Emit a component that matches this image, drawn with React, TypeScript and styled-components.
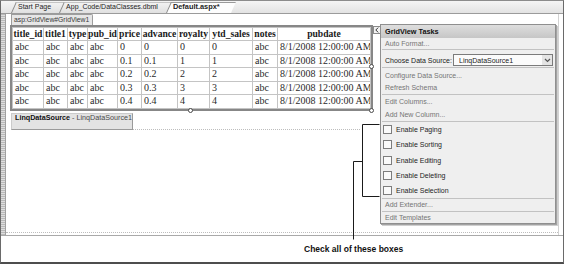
import styled, { createGlobalStyle } from "styled-components";

const GlobalStyle = createGlobalStyle`
  body {
    margin: 0;
    background: #fff;
    font-family: "Liberation Sans", Arial, sans-serif;
  }
`;

const Frame = styled.div`
  position: relative;
  width: 564px;
  height: 264px;
  box-sizing: border-box;
  border-top: 1px solid #8c8c8c;
  border-left: 1px solid #6a6a6a;
  border-right: 1px solid #6a6a6a;
  border-bottom: 2px solid #4d4d4d;
  display: flex;
  flex-direction: column;
  overflow: hidden;
`;

const TabBar = styled.div`
  height: 13px;
  box-sizing: border-box;
  border-bottom: 1px solid #9b9b9b;
  background: linear-gradient(#f5f5f5, #e3e3e3);
  display: flex;
  padding-left: 9px;
`;

const Tab = styled.div<{ $active?: boolean }>`
  position: relative;
  z-index: 0;
  padding: 0 7px 0 8px;
  font-size: ${({ $active }) => ($active ? "7.4px" : "7px")};
  font-weight: ${({ $active }) => ($active ? 700 : 400)};
  line-height: 12px;
  color: #1e1e1e;
  white-space: nowrap;

  &::before {
    content: "";
    position: absolute;
    z-index: -1;
    top: 1px;
    bottom: 0;
    left: 1px;
    right: -4px;
    border-left: 1px solid #8a8a8a;
    border-top: 1px solid ${({ $active }) => ($active ? "#9a9a9a" : "#c4c4c4")};
    background: ${({ $active }) => ($active ? "#fdfdfd" : "linear-gradient(#f2f2f2, #e0e0e0)")};
    transform: skewX(-24deg);
    transform-origin: bottom left;
  }
`;

const Body = styled.div`
  display: flex;
  height: 222px;
  box-sizing: border-box;
  border-bottom: 1px solid #a9a9a9;
`;

const Strip = styled.div`
  width: 5px;
  box-sizing: border-box;
  border-right: 1px solid #a0a0a0;
  background: repeating-linear-gradient(0deg, #b9b9b9 0 1px, #dedede 1px 2px);
`;

const Surface = styled.div`
  width: 553px;
  box-sizing: border-box;
  border-right: 1px solid #d2d2d2;
`;

const Gutter = styled.div`
  width: 4px;
`;

const FormArea = styled.div`
  height: 219px;
  box-sizing: border-box;
  border-bottom: 1px dotted #bdbdbd;
  display: flex;
  flex-direction: column;
  align-items: flex-start;
`;

const TagLabel = styled.div`
  margin-left: 5px;
  width: 82px;
  height: 11px;
  box-sizing: border-box;
  padding: 0 2px;
  border: 1px solid #9d9d9d;
  border-bottom: none;
  border-top-right-radius: 2px;
  background: #e6e6e6;
  font-size: 6.8px;
  line-height: 10px;
  color: #3a3a3a;
  white-space: nowrap;
`;

const GridFrame = styled.div`
  position: relative;
  margin-left: 4px;
  border: 2px solid #878787;
`;

const Grid = styled.table`
  width: 358px;
  table-layout: fixed;
  border-collapse: collapse;
  font-family: "Liberation Serif", "Times New Roman", serif;
  font-size: 10px;
  color: #2a2a2a;
`;

const HeadRow = styled.tr`
  height: 13px;
`;

const DataRow = styled.tr`
  height: 13.5px;
`;

const HeadCell = styled.th`
  border: 1px solid #c4c4c4;
  padding: 0;
  font-size: 9.6px;
  font-weight: 700;
  text-align: center;
  line-height: 12px;
  white-space: nowrap;
  color: #1a1a1a;
`;

const Cell = styled.td`
  border: 1px solid #c4c4c4;
  padding: 0 0 0 2px;
  line-height: 12px;
  white-space: nowrap;
  overflow: hidden;
`;

const Handle = styled.span<{ $at: "bottom" | "right" | "corner" }>`
  position: absolute;
  width: 5px;
  height: 5px;
  box-sizing: border-box;
  border: 1px solid #4a4a4a;
  border-radius: 50%;
  background: #fff;
  ${({ $at }) =>
    $at === "bottom"
      ? "left: 175.5px; bottom: -4.5px;"
      : $at === "right"
      ? "right: -3px; top: 37px;"
      : "right: -3px; bottom: -4.5px;"}
`;

const LinqRow = styled.div`
  margin-top: 2px;
  width: 354px;
  display: flex;
`;

const LinqLabel = styled.div`
  margin-left: 5px;
  width: 122px;
  height: 17px;
  box-sizing: border-box;
  padding: 0 3px;
  background: #e3e3e3;
  border: 1px solid #cbcbcb;
  border-right-color: #9a9a9a;
  border-bottom-color: #9a9a9a;
  font-size: 7.2px;
  line-height: 8px;
  color: #4a4a4a;
  white-space: nowrap;

  b {
    color: #111;
  }
`;

const DottedFill = styled.div`
  flex: 1;
  border-bottom: 1px dotted #bdbdbd;
`;

const Footer = styled.div`
  flex: 1;
  display: flex;
  align-items: center;
  padding-left: 303px;
  font-size: 8.5px;
  font-weight: 700;
  color: #111;
`;

const Expander = styled.div`
  position: absolute;
  left: 372px;
  top: 25px;
  width: 8px;
  height: 8px;
  box-sizing: border-box;
  border: 1px solid #8a8a8a;
  background: #f3f3f3;
  display: flex;
  align-items: center;
  justify-content: center;
`;

const Panel = styled.div`
  position: absolute;
  left: 379px;
  top: 23px;
  width: 176px;
  box-sizing: border-box;
  border: 1px solid #8f8f8f;
  background: #efefef;
  box-shadow: 1px 1px 0 #a3a3a3, 2px 2px 0 #cfcfcf;
  font-size: 7px;
  color: #222;
`;

const PanelHeader = styled.div`
  height: 13px;
  padding-left: 4px;
  display: flex;
  align-items: center;
  background: linear-gradient(#dedede, #c6c6c6);
  font-size: 7.3px;
  font-weight: 700;
  color: #111;
`;

const Section = styled.div<{ $pt?: number; $last?: boolean }>`
  margin: 0 1px;
  padding-top: ${({ $pt }) => $pt ?? 0}px;
  border-bottom: ${({ $last }) => ($last ? "none" : "1px solid #c2c2c2")};
  display: flex;
  flex-direction: column;
`;

const TaskLink = styled.div<{ $h: number }>`
  height: ${({ $h }) => $h}px;
  line-height: ${({ $h }) => $h}px;
  padding-left: 3px;
  color: #757575;
  white-space: nowrap;
`;

const SourceRow = styled.div`
  height: 12px;
  padding: 4px 0 1px 3px;
  display: flex;
  align-items: center;
`;

const Dropdown = styled.div`
  margin-left: auto;
  margin-right: 1px;
  width: 100px;
  height: 12px;
  box-sizing: border-box;
  border: 1px solid #7b7b7b;
  background: #fbfbfb;
  display: flex;
  align-items: center;
  padding-left: 5px;
  color: #222;
`;

const DropArrow = styled.span`
  margin-left: auto;
  width: 10px;
  height: 10px;
  background: #e4e4e4;
  display: flex;
  align-items: center;
  justify-content: center;
`;

const CheckRow = styled.div`
  height: 15.3px;
  padding-left: 1px;
  display: flex;
  align-items: center;
  gap: 4px;
  color: #1e1e1e;
`;

const CheckBox = styled.span`
  width: 9px;
  height: 9px;
  box-sizing: border-box;
  border: 1px solid #7d7d7d;
  background: #fafafa;
`;

const Bracket = styled.svg`
  position: absolute;
  left: 349px;
  top: 119px;
`;

const columns = [31, 24, 20, 30, 24, 36, 32, 43, 25, 93];
const headers = ["title_id", "title1", "type", "pub_id", "price", "advance", "royalty", "ytd_sales", "notes", "pubdate"];
const options = ["Enable Paging", "Enable Sorting", "Enable Editing", "Enable Deleting", "Enable Selection"];

const rowFor = (i: number) => [
  "abc",
  "abc",
  "abc",
  "abc",
  i === 0 ? "0" : `0.${i}`,
  i === 0 ? "0" : `0.${i}`,
  String(i),
  String(i),
  "abc",
  "8/1/2008 12:00:00 AM",
];

export default function App() {
  return (
    <>
      <GlobalStyle />
      <Frame>
        <TabBar>
          <Tab>Start Page</Tab>
          <Tab>App_Code/DataClasses.dbml</Tab>
          <Tab $active>Default.aspx*</Tab>
        </TabBar>
        <Body>
          <Strip />
          <Surface>
            <FormArea>
              <TagLabel>asp:GridView#GridView1</TagLabel>
              <GridFrame>
                <Grid>
                  <colgroup>
                    {columns.map((w, i) => (
                      <col key={i} style={{ width: w }} />
                    ))}
                  </colgroup>
                  <thead>
                    <HeadRow>
                      {headers.map((h) => (
                        <HeadCell key={h}>{h}</HeadCell>
                      ))}
                    </HeadRow>
                  </thead>
                  <tbody>
                    {[0, 1, 2, 3, 4].map((i) => (
                      <DataRow key={i}>
                        {rowFor(i).map((v, j) => (
                          <Cell key={j}>{v}</Cell>
                        ))}
                      </DataRow>
                    ))}
                  </tbody>
                </Grid>
                <Handle $at="bottom" />
                <Handle $at="right" />
                <Handle $at="corner" />
              </GridFrame>
              <LinqRow>
                <LinqLabel>
                  <b>LinqDataSource</b> - LinqDataSource1
                </LinqLabel>
                <DottedFill />
              </LinqRow>
            </FormArea>
          </Surface>
          <Gutter />
        </Body>
        <Footer>Check all of these boxes</Footer>

        <Expander>
          <svg width="4" height="6" viewBox="0 0 4 6">
            <path d="M3.2 0.6 L0.8 3 L3.2 5.4" fill="none" stroke="#333" strokeWidth="1" />
          </svg>
        </Expander>

        <Panel>
          <PanelHeader>GridView Tasks</PanelHeader>
          <Section>
            <TaskLink $h={11}>Auto Format...</TaskLink>
          </Section>
          <Section>
            <SourceRow>
              Choose Data Source:
              <Dropdown>
                LinqDataSource1
                <DropArrow>
                  <svg width="7" height="5" viewBox="0 0 7 5">
                    <path d="M1 1 L3.5 3.5 L6 1" fill="none" stroke="#555" strokeWidth="1.2" />
                  </svg>
                </DropArrow>
              </Dropdown>
            </SourceRow>
          </Section>
          <Section $pt={2}>
            <TaskLink $h={12}>Configure Data Source...</TaskLink>
            <TaskLink $h={12}>Refresh Schema</TaskLink>
          </Section>
          <Section $pt={1}>
            <TaskLink $h={12.5}>Edit Columns...</TaskLink>
            <TaskLink $h={12.5}>Add New Column...</TaskLink>
          </Section>
          <Section>
            {options.map((o) => (
              <CheckRow key={o}>
                <CheckBox />
                {o}
              </CheckRow>
            ))}
          </Section>
          <Section>
            <TaskLink $h={12}>Add Extender...</TaskLink>
          </Section>
          <Section $last>
            <TaskLink $h={11}>Edit Templates</TaskLink>
          </Section>
        </Panel>

        <Bracket width="31" height="121" viewBox="0 0 31 121">
          <path
            d="M29.5 4.5 H12.5 V76.5 H29.5 M12.5 41.5 H3.5 V119.5"
            fill="none"
            stroke="#1a1a1a"
            strokeWidth="1"
          />
        </Bracket>
      </Frame>
    </>
  );
}
